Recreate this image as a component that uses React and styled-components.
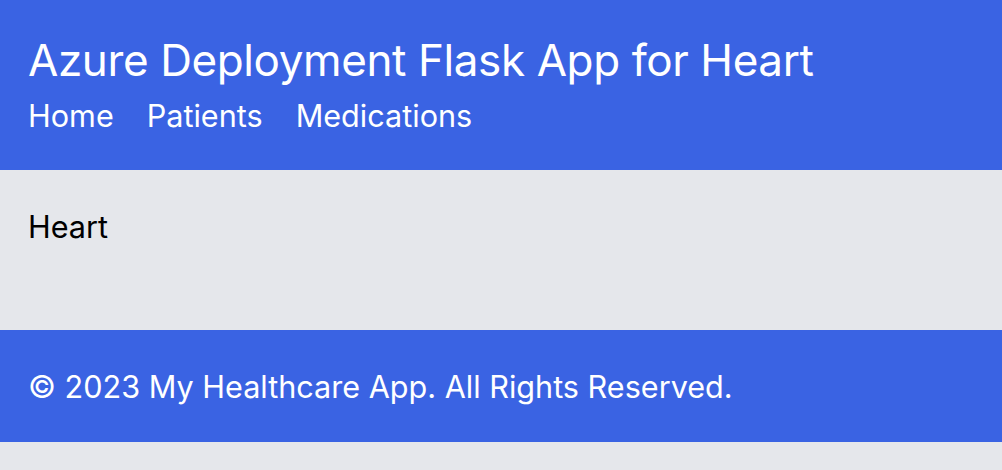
import React from "react";
import styled, { createGlobalStyle } from "styled-components";

const GlobalStyle = createGlobalStyle`
  html, body {
    margin: 0;
    padding: 0;
    background-color: #e5e7eb;
    font-family: Inter, "Noto Sans", sans-serif;
  }
`;

const Header = styled.header`
  background-color: #3a63e3;
  color: white;
  height: 170px;
  box-sizing: border-box;
  padding: 32px 28px 0;
`;

const Title = styled.h1`
  margin: 0;
  font-size: 44px;
  font-weight: 400;
  line-height: 56px;
  letter-spacing: -0.4px;
`;

const Nav = styled.nav`
  display: flex;
  gap: 33px;
  margin-top: 8px;
`;

const NavLink = styled.a`
  color: white;
  text-decoration: none;
  font-size: 30.6px;
  line-height: 40px;
`;

const Main = styled.main`
  height: 160px;
  box-sizing: border-box;
  padding: 37px 28px 0;
  color: black;
  font-size: 30.6px;
  line-height: 40px;
`;

const Footer = styled.footer`
  background-color: #3a63e3;
  color: white;
  height: 112px;
  box-sizing: border-box;
  padding: 0 28px;
  display: flex;
  align-items: center;
  font-size: 30.6px;
`;

export default function App() {
  return (
    <>
      <GlobalStyle />
      <Header>
        <Title>Azure Deployment Flask App for Heart</Title>
        <Nav>
          <NavLink href="#">Home</NavLink>
          <NavLink href="#">Patients</NavLink>
          <NavLink href="#">Medications</NavLink>
        </Nav>
      </Header>
      <Main>Heart</Main>
      <Footer>© 2023 My Healthcare App. All Rights Reserved.</Footer>
    </>
  );
}
